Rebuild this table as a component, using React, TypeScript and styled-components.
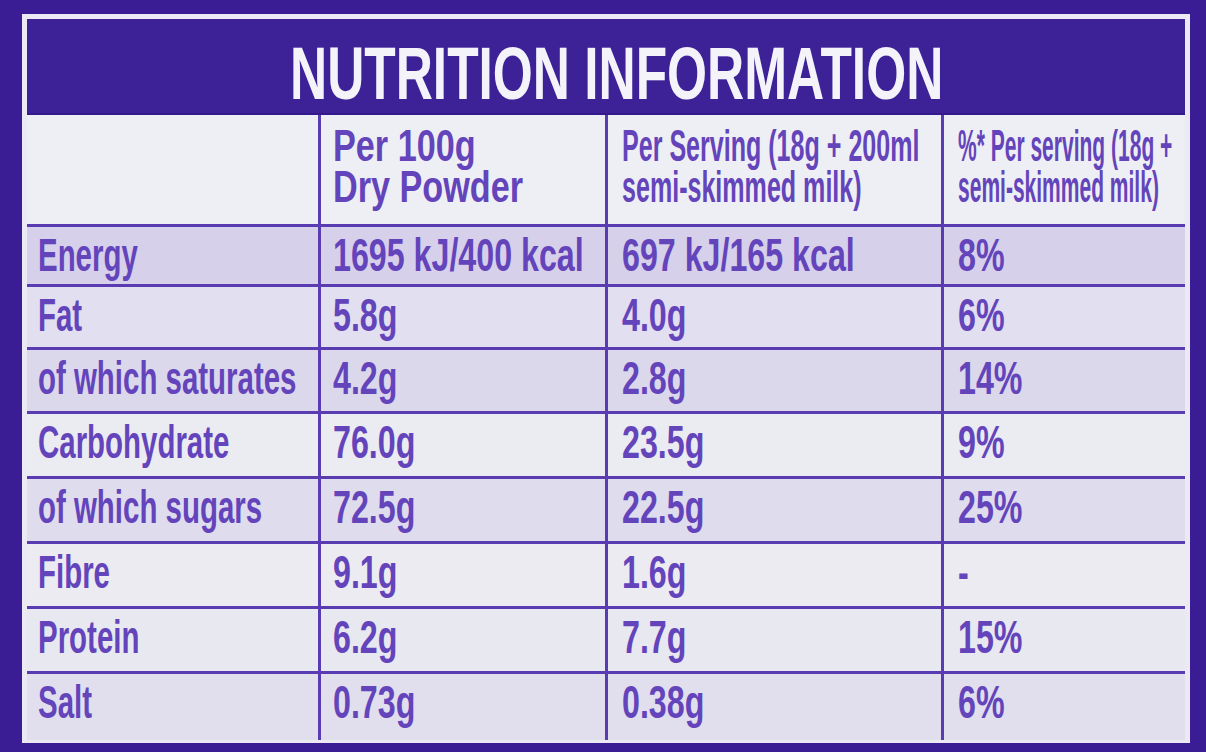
import styled, { createGlobalStyle } from "styled-components";

const GlobalStyle = createGlobalStyle`
  html, body {
    margin: 0;
    padding: 0;
    background: #3a1d94;
  }
  body {
    font-family: "Liberation Sans", Arial, sans-serif;
  }
`;

const Page = styled.div`
  width: 1206px;
  height: 752px;
  box-sizing: border-box;
  padding: 14px 16px 9px 22px;
  background: #3a1d94;
`;

const Label = styled.section`
  height: 100%;
  box-sizing: border-box;
  display: flex;
  flex-direction: column;
  border: 5px solid #ebe9f4;
  border-bottom-width: 3px;
  background: #ecedf3;
`;

const TitleBand = styled.h1`
  margin: 0;
  flex: none;
  height: 96px;
  box-sizing: border-box;
  padding: 18px 0 0 263px;
  background: #3d2197;
  border-bottom: 2px solid #34198c;
  color: #f4f3fa;
  font-size: 74px;
  line-height: 1;
  font-weight: 700;
`;

// condensed look: the installed fonts have no narrow cut, so squeeze horizontally
const Squeeze = styled.span<{ $k: number }>`
  display: block;
  white-space: nowrap;
  transform: scaleX(${(p) => p.$k});
  transform-origin: left center;
`;

const Row = styled.div<{ $bg: string; $h?: number; $head?: boolean }>`
  display: grid;
  grid-template-columns: 294px 287px 336px 1fr;
  flex: ${(p) => (p.$h ? `none` : `1`)};
  height: ${(p) => (p.$h ? `${p.$h}px` : "auto")};
  box-sizing: border-box;
  background: ${(p) => p.$bg};
  border-top: ${(p) => (p.$head ? "none" : "3px solid #5a3cb2")};
`;

const Cell = styled.div<{ $pad: number; $top?: number }>`
  padding: ${(p) => p.$top ?? 5}px 0 0 ${(p) => p.$pad}px;
  border-right: 3px solid #5a3cb2;
  color: #6444bb;
  font-size: 46px;
  line-height: 1;
  font-weight: 700;
  overflow: hidden;

  &:last-child {
    border-right: none;
  }
`;

const HeadCell = styled(Cell)`
  font-size: 45px;
  line-height: 41px;
`;

const pads = [11, 12, 14, 14];

const rows = [
  { label: "Energy", dry: "1695 kJ/400 kcal", serving: "697 kJ/165 kcal", pct: "8%", bg: "#d6d0ea", h: 60 },
  { label: "Fat", dry: "5.8g", serving: "4.0g", pct: "6%", bg: "#e2dff0", h: 63 },
  { label: "of which saturates", dry: "4.2g", serving: "2.8g", pct: "14%", bg: "#dcd8ec", h: 64 },
  { label: "Carbohydrate", dry: "76.0g", serving: "23.5g", pct: "9%", bg: "#ebebf2", h: 65 },
  { label: "of which sugars", dry: "72.5g", serving: "22.5g", pct: "25%", bg: "#dfdcee", h: 65 },
  { label: "Fibre", dry: "9.1g", serving: "1.6g", pct: "-", bg: "#ebebf1", h: 65 },
  { label: "Protein", dry: "6.2g", serving: "7.7g", pct: "15%", bg: "#e8e8f0", h: 65 },
  { label: "Salt", dry: "0.73g", serving: "0.38g", pct: "6%", bg: "#e1dfee" },
];

export default function App() {
  return (
    <>
      <GlobalStyle />
      <Page>
        <Label>
          <TitleBand>
            <Squeeze $k={0.695}>NUTRITION INFORMATION</Squeeze>
          </TitleBand>

          <Row $bg="#eeeff4" $h={109} $head>
            <HeadCell $pad={pads[0]} $top={10} />
            <HeadCell $pad={pads[1]} $top={10}>
              <Squeeze $k={0.76}>Per 100g</Squeeze>
              <Squeeze $k={0.76}>Dry Powder</Squeeze>
            </HeadCell>
            <HeadCell $pad={pads[2]} $top={10}>
              <Squeeze $k={0.557}>Per Serving (18g + 200ml</Squeeze>
              <Squeeze $k={0.557}>semi-skimmed milk)</Squeeze>
            </HeadCell>
            <HeadCell $pad={pads[3]} $top={10}>
              <Squeeze $k={0.467}>%* Per serving (18g +</Squeeze>
              <Squeeze $k={0.467}>semi-skimmed milk)</Squeeze>
            </HeadCell>
          </Row>

          {rows.map((r) => (
            <Row key={r.label} $bg={r.bg} $h={r.h}>
              <Cell $pad={pads[0]}>
                <Squeeze $k={0.64}>{r.label}</Squeeze>
              </Cell>
              <Cell $pad={pads[1]}>
                <Squeeze $k={0.7}>{r.dry}</Squeeze>
              </Cell>
              <Cell $pad={pads[2]}>
                <Squeeze $k={0.7}>{r.serving}</Squeeze>
              </Cell>
              <Cell $pad={pads[3]}>
                <Squeeze $k={0.7}>{r.pct}</Squeeze>
              </Cell>
            </Row>
          ))}
        </Label>
      </Page>
    </>
  );
}
